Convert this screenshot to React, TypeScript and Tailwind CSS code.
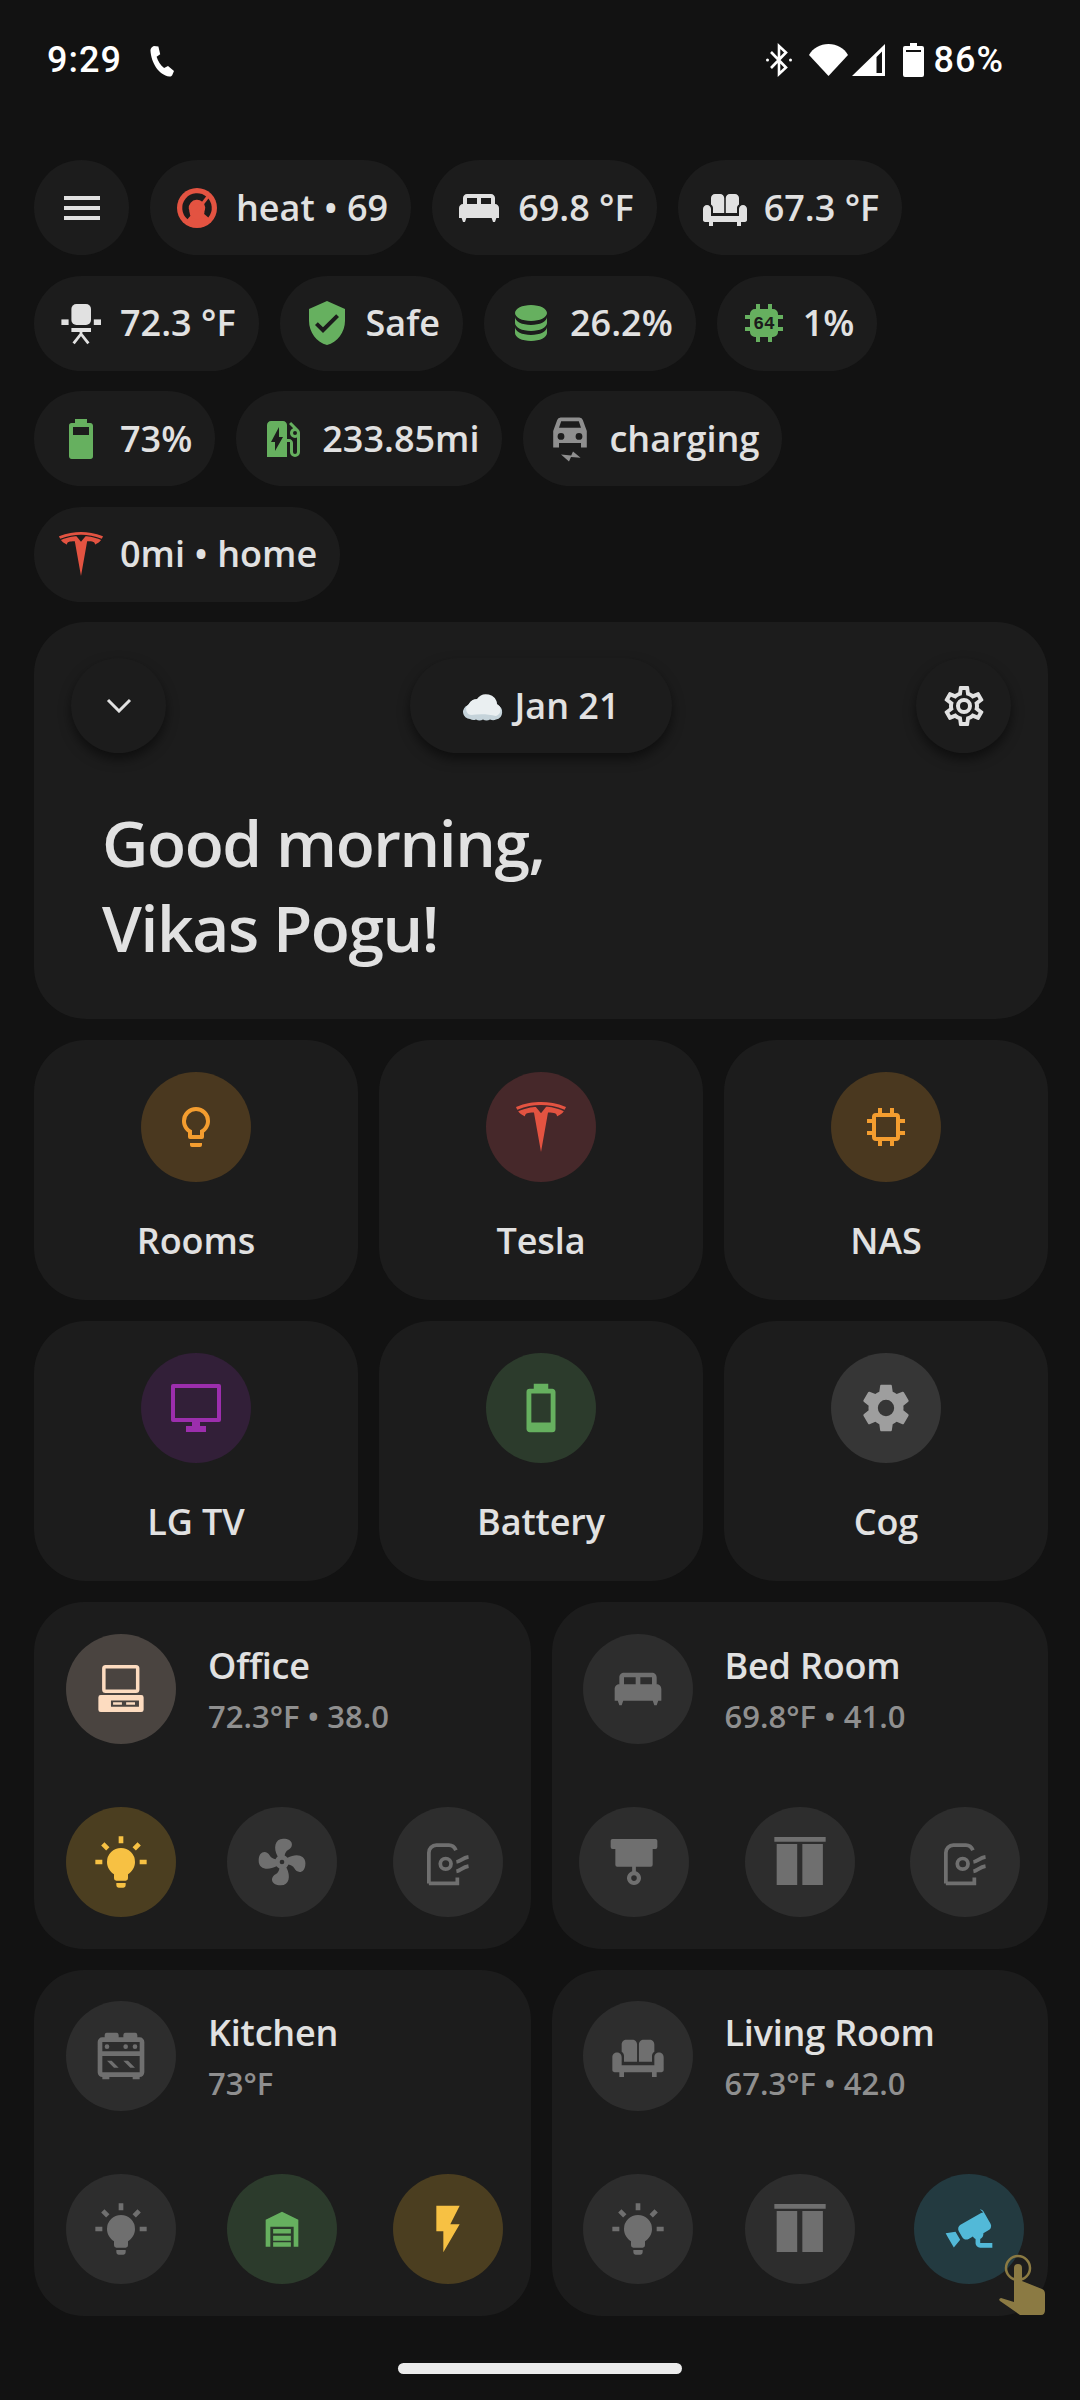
import type { ReactNode } from 'react'
import { SiTesla } from 'react-icons/si'

// 24-unit icon paths, most of them in the Material Design Icons shapes
const paths = {
  menu: 'M3,6H21V8H3V6M3,11H21V13H3V11M3,16H21V18H3V16Z',
  bedKing: 'M20 10V7C20 5.9 19.1 5 18 5H6C4.9 5 4 5.9 4 7V10C2.9 10 2 10.9 2 12V17H3.33L4 19H5L5.67 17H18.33L19 19H20L20.67 17H22V12C22 10.9 21.1 10 20 10M11 10H6V7H11V10M18 10H13V7H18V10Z',
  sofa: 'M7 5C5.9 5 5 5.9 5 7V10.2C5.6 10.6 6 11.2 6 12V14.5H11.6V7C11.6 5.9 10.7 5 9.6 5H7ZM14.4 5C13.3 5 12.4 5.9 12.4 7V14.5H18V12C18 11.2 18.4 10.6 19 10.2V7C19 5.9 18.1 5 17 5H14.4ZM3 10.5C1.9 10.5 1 11.4 1 12.5V18C1 18.8 1.7 19 2.5 19H4V21H6V19H18V21H20V19H21.5C22.3 19 23 18.8 23 18V12.5C23 11.4 22.1 10.5 21 10.5C19.9 10.5 19 11.4 19 12.5V16H5V12.5C5 11.4 4.1 10.5 3 10.5Z',
  shield: 'M10,17L6,13L7.41,11.58L10,14.17L16.59,7.58L18,9L10,17M12,1L3,5V11C3,16.55 6.84,21.74 12,23C17.16,21.74 21,16.55 21,11V5L12,1Z',
  database: 'M12,3C7.58,3 4,4.79 4,7C4,9.21 7.58,11 12,11C16.42,11 20,9.21 20,7C20,4.79 16.42,3 12,3M4,9V12C4,14.21 7.58,16 12,16C16.42,16 20,14.21 20,12V9C20,11.21 16.42,13 12,13C7.58,13 4,11.21 4,9M4,14V17C4,19.21 7.58,21 12,21C16.42,21 20,19.21 20,17V14C20,16.21 16.42,18 12,18C7.58,18 4,16.21 4,14Z',
  battery70: 'M16,10H8V6H16V10M16.67,4H15V2H9V4H7.33A1.33,1.33 0 0,0 6,5.33V20.67C6,21.4 6.6,22 7.33,22H16.67A1.34,1.34 0 0,0 18,20.67V5.33C18,4.6 17.4,4 16.67,4Z',
  battery10: 'M16,18H8V6H16V18M16.67,4H15V2H9V4H7.33A1.33,1.33 0 0,0 6,5.33V20.67C6,21.4 6.6,22 7.33,22H16.67A1.34,1.34 0 0,0 18,20.67V5.33C18,4.6 17.4,4 16.67,4Z',
  evStation: 'M19.77,7.23L19.78,7.22L16.06,3.5L15,4.56L17.11,6.67C16.17,7.03 15.5,7.93 15.5,9A2.5,2.5 0 0,0 18,11.5C18.36,11.5 18.69,11.42 19,11.29V18.5A1,1 0 0,1 18,19.5A1,1 0 0,1 17,18.5V14C17,12.9 16.1,12 15,12H14V5C14,3.9 13.1,3 12,3H6C4.9,3 4,3.9 4,5V21H14V13.5H15.5V18.5A2.5,2.5 0 0,0 18,21A2.5,2.5 0 0,0 20.5,18.5V9C20.5,8.31 20.22,7.68 19.77,7.23M18,10A1,1 0 0,1 17,9A1,1 0 0,1 18,8A1,1 0 0,1 19,9A1,1 0 0,1 18,10M8,18V13.5H6L10,6V11H12L8,18Z',
  bulbOutline: 'M12,2A7,7 0 0,1 19,9C19,11.38 17.81,13.47 16,14.74V17A1,1 0 0,1 15,18H9A1,1 0 0,1 8,17V14.74C6.19,13.47 5,11.38 5,9A7,7 0 0,1 12,2M9,21V20H15V21A1,1 0 0,1 14,22H10A1,1 0 0,1 9,21M12,4A5,5 0 0,0 7,9C7,11.05 8.23,12.81 10,13.58V16H14V13.58C15.77,12.81 17,11.05 17,9A5,5 0 0,0 12,4Z',
  cog: 'M12,15.5A3.5,3.5 0 0,1 8.5,12A3.5,3.5 0 0,1 12,8.5A3.5,3.5 0 0,1 15.5,12A3.5,3.5 0 0,1 12,15.5M19.43,12.97C19.47,12.65 19.5,12.33 19.5,12C19.5,11.67 19.47,11.34 19.43,11L21.54,9.37C21.73,9.22 21.78,8.95 21.66,8.73L19.66,5.27C19.54,5.05 19.27,4.96 19.05,5.05L16.56,6.05C16.04,5.66 15.5,5.32 14.87,5.07L14.5,2.42C14.46,2.18 14.25,2 14,2H10C9.75,2 9.54,2.18 9.5,2.42L9.13,5.07C8.5,5.32 7.96,5.66 7.44,6.05L4.95,5.05C4.73,4.96 4.46,5.05 4.34,5.27L2.34,8.73C2.21,8.95 2.27,9.22 2.46,9.37L4.57,11C4.53,11.34 4.5,11.67 4.5,12C4.5,12.33 4.53,12.65 4.57,12.97L2.46,14.63C2.27,14.78 2.21,15.05 2.34,15.27L4.34,18.73C4.46,18.95 4.73,19.03 4.95,18.95L7.44,17.94C7.96,18.34 8.5,18.68 9.13,18.93L9.5,21.58C9.54,21.82 9.75,22 10,22H14C14.25,22 14.46,21.82 14.5,21.58L14.87,18.93C15.5,18.67 16.04,18.34 16.56,17.94L19.05,18.95C19.27,19.03 19.54,18.95 19.66,18.73L21.66,15.27C21.78,15.05 21.73,14.78 21.54,14.63L19.43,12.97Z',
  cogOutline: 'M12,8A4,4 0 0,1 16,12A4,4 0 0,1 12,16A4,4 0 0,1 8,12A4,4 0 0,1 12,8M12,10A2,2 0 0,0 10,12A2,2 0 0,0 12,14A2,2 0 0,0 14,12A2,2 0 0,0 12,10M10,22C9.75,22 9.54,21.82 9.5,21.58L9.13,18.93C8.5,18.68 7.96,18.34 7.44,17.94L4.95,18.95C4.73,19.03 4.46,18.95 4.34,18.73L2.34,15.27C2.21,15.05 2.27,14.78 2.46,14.63L4.57,12.97L4.5,12L4.57,11L2.46,9.37C2.27,9.22 2.21,8.95 2.34,8.73L4.34,5.27C4.46,5.05 4.73,4.96 4.95,5.05L7.44,6.05C7.96,5.66 8.5,5.32 9.13,5.07L9.5,2.42C9.54,2.18 9.75,2 10,2H14C14.25,2 14.46,2.18 14.5,2.42L14.87,5.07C15.5,5.32 16.04,5.66 16.56,6.05L19.05,5.05C19.27,4.96 19.54,5.05 19.66,5.27L21.66,8.73C21.79,8.95 21.73,9.22 21.54,9.37L19.43,11L19.5,12L19.43,13L21.54,14.63C21.73,14.78 21.79,15.05 21.66,15.27L19.66,18.73C19.54,18.95 19.27,19.04 19.05,18.95L16.56,17.95C16.04,18.34 15.5,18.68 14.87,18.93L14.5,21.58C14.46,21.82 14.25,22 14,22H10M11.25,4L10.88,6.61C9.68,6.86 8.62,7.5 7.85,8.39L5.44,7.35L4.69,8.65L6.8,10.2C6.4,11.37 6.4,12.64 6.8,13.8L4.68,15.36L5.43,16.66L7.86,15.62C8.63,16.5 9.68,17.14 10.87,17.38L11.24,20H12.76L13.13,17.39C14.32,17.14 15.37,16.5 16.14,15.62L18.57,16.66L19.32,15.36L17.2,13.81C17.6,12.64 17.6,11.37 17.2,10.2L19.31,8.65L18.56,7.35L16.15,8.39C15.38,7.5 14.32,6.86 13.12,6.62L12.75,4H11.25Z',
  bulbOn: 'M12,6A6,6 0 0,1 18,12C18,14.22 16.79,16.16 15,17.2V19A1,1 0 0,1 14,20H10A1,1 0 0,1 9,19V17.2C7.21,16.16 6,14.22 6,12A6,6 0 0,1 12,6M14,21V22A1,1 0 0,1 13,23H11A1,1 0 0,1 10,22V21H14M20,11H23V13H20V11M1,11H4V13H1V11M13,1V4H11V1H13M4.92,3.5L7.05,5.64L5.63,7.05L3.5,4.93L4.92,3.5M16.95,5.63L19.07,3.5L20.5,4.93L18.37,7.05L16.95,5.63Z',
  fan: 'M12,11A1,1 0 0,0 11,12A1,1 0 0,0 12,13A1,1 0 0,0 13,12A1,1 0 0,0 12,11M12.5,2C17,2 17.11,5.57 14.75,6.75C13.76,7.24 13.32,8.29 13.13,9.22C13.61,9.42 14.03,9.73 14.35,10.13C18.05,8.13 22.03,8.92 22.03,12.5C22.03,17 18.46,17.1 17.28,14.73C16.78,13.74 15.72,13.3 14.79,13.11C14.59,13.59 14.28,14 13.88,14.34C15.87,18.03 15.08,22 11.5,22C7,22 6.91,18.42 9.27,17.24C10.25,16.75 10.69,15.71 10.89,14.79C10.4,14.59 9.97,14.27 9.65,13.87C5.96,15.85 2,15.07 2,11.5C2,7 5.56,6.89 6.74,9.26C7.24,10.25 8.29,10.68 9.22,10.87C9.41,10.39 9.73,9.97 10.14,9.65C8.15,5.96 8.94,2 12.5,2Z',
  stove: 'M6,14H8L11,17H9L6,14M4,4H5V3A1,1 0 0,1 6,2H10A1,1 0 0,1 11,3V4H13V3A1,1 0 0,1 14,2H18A1,1 0 0,1 19,3V4H20A2,2 0 0,1 22,6V19A2,2 0 0,1 20,21V22H17V21H7V22H4V21A2,2 0 0,1 2,19V6A2,2 0 0,1 4,4M18,7A1,1 0 0,1 19,8A1,1 0 0,1 18,9A1,1 0 0,1 17,8A1,1 0 0,1 18,7M14,7A1,1 0 0,1 15,8A1,1 0 0,1 14,9A1,1 0 0,1 13,8A1,1 0 0,1 14,7M20,6H4V10H20V6M4,19H20V12H4V19M6,7A1,1 0 0,1 7,8A1,1 0 0,1 6,9A1,1 0 0,1 5,8A1,1 0 0,1 6,7M13,14H15L18,17H16L13,14Z',
  flash: 'M7,2V13H10V22L17,10H13L17,2H7Z',
  cctv: 'M18.15 4.94c-.38-.03-.78.06-1.15.26l-8.65 5c-.96.56-1.28 1.8-.73 2.74l1.5 2.59c.55.97 1.77 1.29 2.73.74l1.8-1.04c.27.46.67.83 1.16 1.04v1.77c0 1.09.89 1.96 2 1.96H22v-1.96h-5.19v-1.77c.91-.41 1.5-1.4 1.34-2.46l2.35-1.36c.96-.55 1.28-1.78.73-2.74l-3-5.2c-.34-.57-.94-.93-1.58-.97M6.22 13.17l-4.22.7.75 1.3 2 3.46.75 1.3 2.72-3.3-2-3.46z',
  garage: 'M12 4.6L19 8V19.6H17V11H7V19.6H5V8ZM8.2 12H15.8V13.9H8.2ZM8.2 14.9H15.8V17H8.2ZM8.2 17.7H15.8V19.6H8.2Z',
  blind: 'M2.8 2.1H21.2A.8.8 0 0 1 22 2.9V5.6A.8.8 0 0 1 21.2 6.4H20V13.2A.8.8 0 0 1 19.2 14H12.8V16A3 3 0 1 1 11.2 16V14H4.8A.8.8 0 0 1 4 13.2V6.4H2.8A.8.8 0 0 1 2 5.6V2.9A.8.8 0 0 1 2.8 2.1ZM12 17.7A1.2 1.2 0 1 0 12 20.1A1.2 1.2 0 1 0 12 17.7Z',
  curtains: 'M1 1.3H23V3.3H1ZM2 4.3H10.8V21.9H2ZM13 4.3H21.8V21.9H13Z',
  desktop: 'M5.4 1.7H18.4A1.5 1.5 0 0 1 19.9 3.2V12.2A1.5 1.5 0 0 1 18.4 13.7H5.4A1.5 1.5 0 0 1 3.9 12.2V3.2A1.5 1.5 0 0 1 5.4 1.7ZM5.4 3.2V12.2H18.4V3.2ZM3.3 14.6H20.7A1 1 0 0 1 21.7 15.6V20.9A1 1 0 0 1 20.7 21.9H3.3A1 1 0 0 1 2.3 20.9V15.6A1 1 0 0 1 3.3 14.6ZM7.7 16.9V19.6H19.7V16.9ZM8.6 17.7H12.4V18.8H8.6ZM14.2 17.7H18V18.8H14.2Z',
  cpu: 'M8 2.5H10V5H14V2.5H16V5H17A2 2 0 0 1 19 7V8H21.5V10H19V14H21.5V16H19V17A2 2 0 0 1 17 19H16V21.5H14V19H10V21.5H8V19H7A2 2 0 0 1 5 17V16H2.5V14H5V10H2.5V8H5V7A2 2 0 0 1 7 5H8ZM7 7V17H17V7Z',
}

function Icon({ d, className }: { d: string; className: string }) {
  return (
    <svg viewBox="0 0 24 24" className={className} fill="currentColor">
      <path d={d} fillRule="evenodd" />
    </svg>
  )
}

function HeatIcon() {
  return (
    <svg viewBox="0 0 48 48" className="w-[48px] h-[48px]">
      <circle cx="24" cy="24" r="20" fill="#e35341" />
      <path d="M16.6 32.800A11.500 11.500 0 1 1 32.800 31.400" fill="none" stroke="#1c1c1c" strokeWidth="6.500" />
      <circle cx="24" cy="28" r="7.500" fill="#e35341" />
      <path d="M24 27L35 12.500" stroke="#e35341" strokeWidth="3" />
    </svg>
  )
}

function ChairIcon() {
  return (
    <svg viewBox="0 0 24 24" className="w-[48px] h-[48px]" fill="currentColor">
      <rect x="7.200" y="2.500" width="9.800" height="10.500" rx="2.500" />
      <rect x="2.200" y="10.200" width="3.600" height="2.800" />
      <rect x="18.400" y="10.200" width="3.600" height="2.800" />
      <rect x="7.200" y="14.500" width="9.800" height="2" />
      <path d="M12 16v2M8.300 22.200L12 17.500l3.700 4.700" stroke="currentColor" strokeWidth="1.400" fill="none" />
    </svg>
  )
}

function CpuBitIcon() {
  return (
    <svg viewBox="0 0 24 24" className="w-[48px] h-[48px]">
      <path d="M8 2.500h2V5h4V2.500h2V5h.5a2.500 2.500 0 0 1 2.500 2.500V8h2.500v2H19v4h2.500v2H19v.5a2.500 2.500 0 0 1-2.500 2.500H16v2.500h-2V19h-4v2.500H8V19h-.5A2.500 2.500 0 0 1 5 16.500V16H2.500v-2H5v-4H2.500V8H5v-.5A2.500 2.500 0 0 1 7.500 5H8z" fill="#66b05f" />
      <text x="12" y="15.200" textAnchor="middle" fontSize="9" fontWeight="700" fontFamily="'Liberation Mono', monospace" fill="#1c1c1c">64</text>
    </svg>
  )
}

function CarChargingIcon() {
  return (
    <svg viewBox="0 0 24 24" className="w-[48px] h-[48px]" fill="currentColor">
      <path fillRule="evenodd" d="M7.300 1.200H16.700A1.800 1.800 0 0 1 18.400 2.500L20.400 8V13.800H20.400V16.300H17.500V14H6.500V16.300H3.600V8L5.600 2.500A1.800 1.800 0 0 1 7.300 1.200ZM7.600 3.100L6.500 6.400H17.500L16.400 3.100ZM7.500 9A1.700 1.700 0 1 0 7.500 12.400A1.700 1.700 0 1 0 7.500 9ZM16.500 9A1.700 1.700 0 1 0 16.500 12.400A1.700 1.700 0 1 0 16.500 9Z" />
      <path d="M7.500 19.800L12.600 20.200L13.500 18.200L17.300 21.400L12.500 21L11.500 23.200Z" />
    </svg>
  )
}

function CloudIcon() {
  return (
    <svg viewBox="0 0 42 30" className="w-[42px] h-[30px]">
      <path d="M8 28a7 7 0 0 1-2-13.700A9 9 0 0 1 15 9a11 11 0 0 1 20 5 7.500 7.500 0 0 1-1 14.500c-2 1-4 .8-6 0-2 1.200-5 1.200-7 0-2 1.200-5 1.200-7 0-2 .8-4 .8-6-.5z" fill="#c5d3da" />
      <path d="M9 24a6 6 0 0 1-2-11A9 9 0 0 1 15 8a11 11 0 0 1 20 5 6.500 6.500 0 0 1-1 12c-8-2-17-2-25-1z" fill="#eaeff1" />
    </svg>
  )
}

function SensorIcon() {
  return (
    <svg viewBox="0 0 24 24" className="w-[56px] h-[56px]" fill="none" stroke="currentColor" strokeWidth="1.600">
      <path d="M3.800 21.200V8a3.200 3.200 0 0 1 3.200-3.200h5.400c1.400 0 2.400.8 3 2.200" />
      <path d="M3.800 21.200H16V18.600" />
      <circle cx="11" cy="12.800" r="2.300" />
      <path d="M15.600 12c1.800-.3 2.600-1.800 5.200-2.200M15.600 16c1.800-.3 2.600-1.800 5.200-2.200" />
    </svg>
  )
}

type Chip = { label: string; icon: ReactNode; color: string }

const big = 'w-[48px] h-[48px]'

const chips: Chip[] = [
  { label: 'heat • 69', icon: <HeatIcon />, color: '' },
  { label: '69.8 °F', icon: <Icon d={paths.bedKing} className={big} />, color: 'text-[#e1e1e1]' },
  { label: '67.3 °F', icon: <Icon d={paths.sofa} className={big} />, color: 'text-[#e1e1e1]' },
  { label: '72.3 °F', icon: <ChairIcon />, color: 'text-[#e1e1e1]' },
  { label: 'Safe', icon: <Icon d={paths.shield} className={big} />, color: 'text-[#66b05f]' },
  { label: '26.2%', icon: <Icon d={paths.database} className={big} />, color: 'text-[#66b05f]' },
  { label: '1%', icon: <CpuBitIcon />, color: '' },
  { label: '73%', icon: <Icon d={paths.battery70} className={big} />, color: 'text-[#66b05f]' },
  { label: '233.85mi', icon: <Icon d={paths.evStation} className={big} />, color: 'text-[#66b05f]' },
  { label: 'charging', icon: <CarChargingIcon />, color: 'text-[#8f8f8f]' },
  { label: '0mi • home', icon: <SiTesla className="w-[44px] h-[44px]" />, color: 'text-[#e35341]' },
]

const shortcuts = [
  { label: 'Rooms', circle: 'bg-[#4a381f] text-[#f49d2f]', icon: <Icon d={paths.bulbOutline} className={big} /> },
  { label: 'Tesla', circle: 'bg-[#46282a] text-[#e35341]', icon: <SiTesla className="w-[50px] h-[50px]" /> },
  { label: 'NAS', circle: 'bg-[#4a381f] text-[#f49d2f]', icon: <Icon d={paths.cpu} className={big} /> },
  {
    label: 'LG TV',
    circle: 'bg-[#321f38] text-[#9c2ead]',
    icon: (
      <svg viewBox="0 0 26 24" className="w-[52px] h-[48px]" fill="currentColor">
        <path fillRule="evenodd" d="M1.500 0H24.500A1 1 0 0 1 25.500 1V18A1 1 0 0 1 24.500 19H15V21H18V24H8V21H11V19H1.500A1 1 0 0 1 .5 18V1A1 1 0 0 1 1.500 0ZM2.500 2V17H23.500V2Z" />
      </svg>
    ),
  },
  { label: 'Battery', circle: 'bg-[#2c3b2c] text-[#66b05f]', icon: <Icon d={paths.battery10} className="w-[58px] h-[58px]" /> },
  { label: 'Cog', circle: 'bg-[#363636] text-[#9e9e9e]', icon: <Icon d={paths.cog} className="w-[56px] h-[56px]" /> },
]

const off = 'bg-[#2d2d2d] text-[#6f6f6f]'
const room = 'w-[56px] h-[56px]'

const rooms = [
  {
    name: 'Office',
    sub: '72.3°F • 38.0',
    top: 'pt-[32px]',
    head: 'ml-[32px] gap-[32px]',
    headCircle: 'bg-[#4a4440] text-[#fddcc0]',
    headIcon: <Icon d={paths.desktop} className={room} />,
    buttons: [
      { pos: 'ml-[32px]', circle: 'bg-[#4b3e20] text-[#f7c143]', icon: <Icon d={paths.bulbOn} className={room} /> },
      { pos: 'ml-[51px]', circle: off, icon: <Icon d={paths.fan} className={room} /> },
      { pos: 'ml-[56px]', circle: off, icon: <SensorIcon /> },
    ],
  },
  {
    name: 'Bed Room',
    sub: '69.8°F • 41.0',
    top: 'pt-[32px]',
    head: 'ml-[31px] gap-[32px]',
    headCircle: off,
    headIcon: <Icon d={paths.bedKing} className={room} />,
    buttons: [
      { pos: 'ml-[27px]', circle: off, icon: <Icon d={paths.blind} className={room} /> },
      { pos: 'ml-[56px]', circle: off, icon: <Icon d={paths.curtains} className={room} /> },
      { pos: 'ml-[55px]', circle: off, icon: <SensorIcon /> },
    ],
  },
  {
    name: 'Kitchen',
    sub: '73°F',
    top: 'pt-[31px]',
    head: 'ml-[32px] gap-[32px]',
    headCircle: off,
    headIcon: <Icon d={paths.stove} className={room} />,
    buttons: [
      { pos: 'ml-[32px]', circle: off, icon: <Icon d={paths.bulbOn} className={room} /> },
      { pos: 'ml-[51px]', circle: 'bg-[#2c3b2c] text-[#66b05f]', icon: <Icon d={paths.garage} className={room} /> },
      { pos: 'ml-[56px]', circle: 'bg-[#4b3e20] text-[#f7c143]', icon: <Icon d={paths.flash} className={room} /> },
    ],
  },
  {
    name: 'Living Room',
    sub: '67.3°F • 42.0',
    top: 'pt-[31px]',
    head: 'ml-[31px] gap-[32px]',
    headCircle: off,
    headIcon: <Icon d={paths.sofa} className={room} />,
    buttons: [
      { pos: 'ml-[31px]', circle: off, icon: <Icon d={paths.bulbOn} className={room} /> },
      { pos: 'ml-[52px]', circle: off, icon: <Icon d={paths.curtains} className={room} /> },
      { pos: 'ml-[59px]', circle: 'bg-[#233a40] text-[#52b9d8]', icon: <Icon d={paths.cctv} className={room} /> },
    ],
  },
]

function StatusBar() {
  return (
    <div className="h-[120px] shrink-0 flex items-center justify-between pl-[47px] pr-[76px] text-white text-[36px] font-medium tracking-[1px] font-['Roboto',sans-serif]">
      <div className="flex items-center gap-[22px]">
        <span>9:29</span>
        <svg viewBox="0 0 24 24" className="w-[36px] h-[36px]" fill="currentColor">
          <path d="M6.600 2.600l3 .4 1.200 5.200-2.400 1.600c.9 2.900 2.600 5.600 5 7.600l2.600-1.400 4 3.400-1.200 2.800c-.5.6-1 .9-1.800.8C9.600 21.800 4.800 13.700 4.300 5.600c0-1.400 1-2.600 2.300-3z" />
        </svg>
      </div>
      <div className="flex items-center">
        <svg viewBox="0 0 28 34" className="w-[28px] h-[34px]" fill="none" stroke="currentColor" strokeWidth="2.600">
          <path d="M6 9l15 15.500L14 31V3l7 6.500L6 25" />
          <circle cx="2.500" cy="17" r="1.500" fill="currentColor" stroke="none" />
          <circle cx="25.500" cy="17" r="1.500" fill="currentColor" stroke="none" />
        </svg>
        <svg viewBox="0 0 39 32" className="w-[39px] h-[32px] ml-[16px]" fill="currentColor">
          <path d="M19.500 0C28 0 35 4 39 11L19.500 32 0 11C4 4 11 0 19.500 0z" />
        </svg>
        <svg viewBox="0 0 33 32" className="w-[33px] h-[32px] ml-[4px]" fill="currentColor">
          <path fillRule="evenodd" d="M33 0V32H0ZM30 7.500L24.500 13V29H30Z" />
        </svg>
        <svg viewBox="0 0 21 34" className="w-[21px] h-[34px] ml-[18px]" fill="currentColor">
          <path fillRule="evenodd" d="M7 0H14V3H19A2 2 0 0 1 21 5V32A2 2 0 0 1 19 34H2A2 2 0 0 1 0 32V5A2 2 0 0 1 2 3H7ZM3 7V9H18V7Z" />
        </svg>
        <span className="ml-[10px]">86%</span>
      </div>
    </div>
  )
}

function ChipPill({ chip }: { chip: Chip }) {
  return (
    <div className={`h-[95px] flex items-center gap-[15px] px-[23px] rounded-full bg-[#1c1c1c] ${chip.color}`}>
      <span className="flex items-center justify-center w-[48px] h-[48px] shrink-0">{chip.icon}</span>
      <span className="text-[36px] font-semibold text-[#e1e1e1]">{chip.label}</span>
    </div>
  )
}

function RoundButton({ children }: { children: ReactNode }) {
  return (
    <div className="w-[95px] h-[95px] flex items-center justify-center rounded-full bg-[#1c1c1c] text-[#e1e1e1] shadow-[0_6px_12px_rgba(0,0,0,0.5)]">
      {children}
    </div>
  )
}

export default function App() {
  return (
    <div className="w-[1080px] h-[2400px] overflow-hidden relative bg-[#121212] font-['Open_Sans',sans-serif]">
      <StatusBar />

      <div className="pl-[34px] pr-[32px] pt-[40px]">
        <div className="flex flex-wrap gap-x-[21px] gap-y-[20.6px]">
          <div className="w-[95px] h-[95px] flex items-center justify-center rounded-full bg-[#1c1c1c] text-[#e1e1e1]">
            <Icon d={paths.menu} className={big} />
          </div>
          {chips.map((chip) => (
            <ChipPill key={chip.label} chip={chip} />
          ))}
        </div>

        {/* Greeting */}
        <div className="mt-[20.6px] h-[397px] rounded-[52px] bg-[#1c1c1c] pt-[36px] px-[37px]">
          <div className="flex items-center justify-between">
            <RoundButton>
              <svg viewBox="0 0 26 15" className="w-[26px] h-[15px]" fill="none" stroke="currentColor" strokeWidth="3">
                <path d="M2 2l11 11L24 2" />
              </svg>
            </RoundButton>
            <div className="w-[262px] h-[95px] flex items-center justify-center gap-[10px] rounded-full bg-[#1c1c1c] text-[36px] font-semibold text-[#e1e1e1] shadow-[0_6px_12px_rgba(0,0,0,0.5)]">
              <CloudIcon />
              <span>Jan 21</span>
            </div>
            <RoundButton>
              <Icon d={paths.cogOutline} className="w-[48px] h-[48px]" />
            </RoundButton>
          </div>
          <div className="mt-[47px] pl-[31px] text-[64px] leading-[85px] font-semibold tracking-[-1.4px] text-[#e1e1e1]">
            <div>Good morning,</div>
            <div>Vikas Pogu!</div>
          </div>
        </div>

        {/* Shortcuts */}
        <div className="mt-[21px] grid grid-cols-3 gap-[21px]">
          {shortcuts.map((s) => (
            <div key={s.label} className="h-[260px] rounded-[52px] bg-[#1c1c1c] flex flex-col items-center pt-[32px]">
              <div className={`w-[110px] h-[110px] rounded-full flex items-center justify-center ${s.circle}`}>{s.icon}</div>
              <div className="mt-[35px] text-[36px] leading-[48px] font-semibold tracking-[-0.1px] text-[#e1e1e1]">{s.label}</div>
            </div>
          ))}
        </div>

        {/* Rooms */}
        <div className="mt-[21px] grid grid-cols-2 gap-[21px]">
          {rooms.map((r) => (
            <div key={r.name} className={`h-[346.5px] rounded-[50px] bg-[#1c1c1c] ${r.top}`}>
              <div className={`flex items-start ${r.head}`}>
                <div className={`w-[110px] h-[110px] shrink-0 rounded-full flex items-center justify-center ${r.headCircle}`}>{r.headIcon}</div>
                <div>
                  <div className="text-[36px] leading-[48px] mt-[8px] font-semibold tracking-[-0.2px] text-[#e1e1e1]">{r.name}</div>
                  <div className="text-[31px] leading-[42px] mt-[5px] font-semibold text-[#8f8f8f]">{r.sub}</div>
                </div>
              </div>
              <div className="flex mt-[63px]">
                {r.buttons.map((b, i) => (
                  <div key={i} className={`w-[110px] h-[110px] shrink-0 rounded-full flex items-center justify-center ${b.pos} ${b.circle}`}>
                    {b.icon}
                  </div>
                ))}
              </div>
            </div>
          ))}
        </div>
      </div>

      {/* Home indicator */}
      <div className="mt-[47px] mx-auto w-[284px] h-[11px] rounded-full bg-[#ebebeb]" />

      {/* Tutorial touch pointer lying over the last tile */}
      <svg viewBox="0 0 70 85" className="absolute left-[985px] top-[2240px] w-[70px] h-[85px]">
        <circle cx="33" cy="28" r="12" fill="none" stroke="#8b7a43" strokeWidth="2.500" />
        <path d="M29 28a4 4 0 0 1 8 0V41L57 49Q60 50 60 54V70Q60 75 56 75H35L15 61Q13 59 16 58L29 62Z" fill="#8b7a43" />
      </svg>
    </div>
  )
}
